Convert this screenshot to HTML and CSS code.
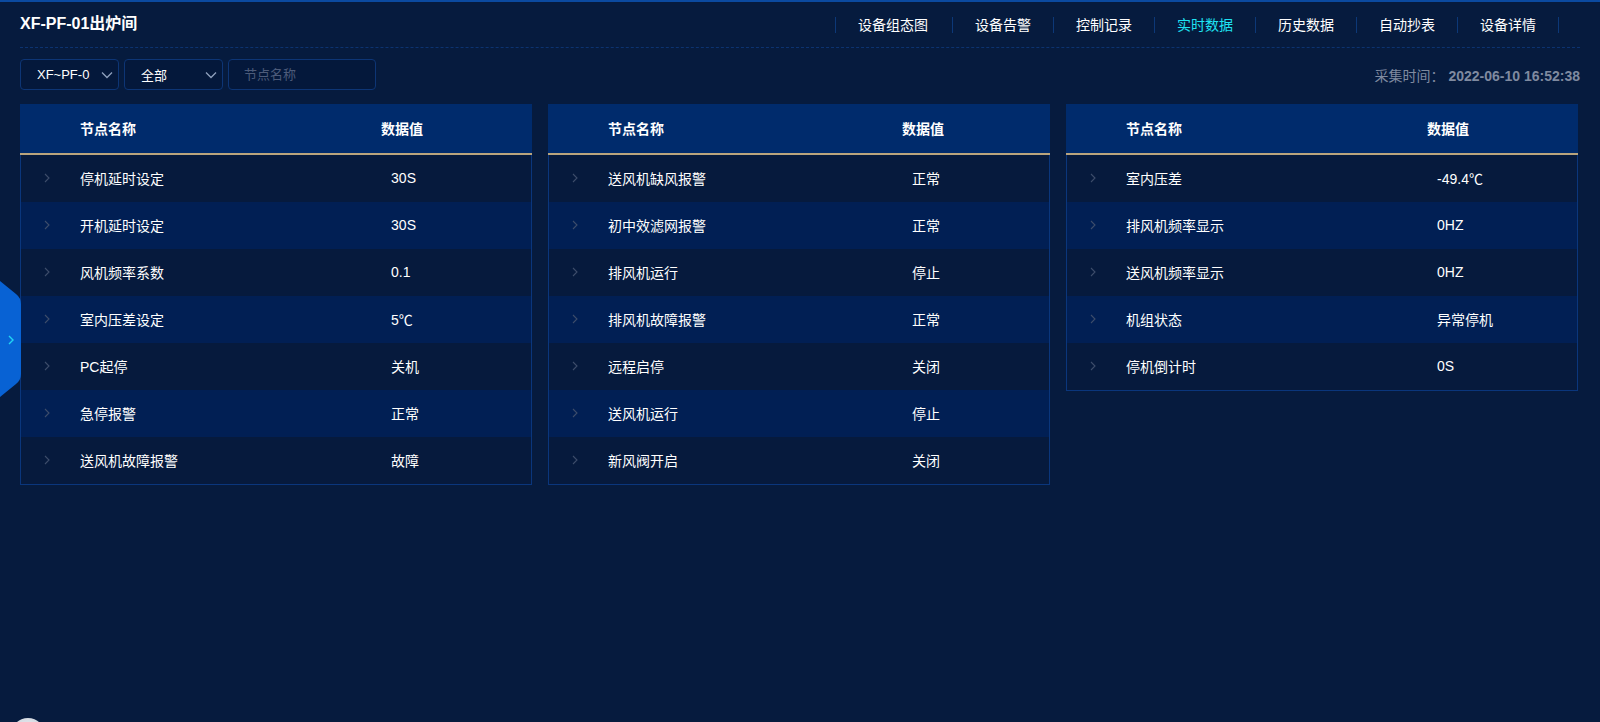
FILE: index.html
```html
<!DOCTYPE html>
<html lang="zh-CN">
<head>
  <meta charset="UTF-8">
  <title>XF-PF-01出炉间 - 实时数据</title>
  <link rel="stylesheet" href="styles.css">
</head>
<body>

  <div class="top-line"></div>

  <header class="head">
    <h1>XF-PF-01出炉间</h1>
    <nav>
      <a>设备组态图</a>
      <a>设备告警</a>
      <a>控制记录</a>
      <a class="active">实时数据</a>
      <a>历史数据</a>
      <a>自动抄表</a>
      <a>设备详情</a>
    </nav>
  </header>

  <div class="toolbar">
    <div class="filters">
      <div class="select select-device">
        <span>XF~PF-01</span>
        <svg width="12" height="8" viewBox="0 0 12 8"><polyline points="1,1.5 6,6.5 11,1.5" fill="none" stroke="#8fa0bd" stroke-width="1.3"/></svg>
      </div>
      <div class="select select-type">
        <span>全部</span>
        <svg width="12" height="8" viewBox="0 0 12 8"><polyline points="1,1.5 6,6.5 11,1.5" fill="none" stroke="#8fa0bd" stroke-width="1.3"/></svg>
      </div>
      <input type="text" class="search" placeholder="节点名称">
    </div>
    <div class="collect-time">采集时间： <b>2022-06-10 16:52:38</b></div>
  </div>

  <div class="panels" id="panels"></div>

  <div class="side-tab">
    <svg width="21" height="117" viewBox="0 0 21 117">
      <path d="M0 0 L16 13 Q21 17 21 23 L21 93 Q21 99 16 103 L0 116 Z" fill="#0862d4"/>
      <polyline points="9,55 13,59 9,63" fill="none" stroke="#21d4f5" stroke-width="1.4"/>
    </svg>
  </div>

  <div class="float-btn"></div>

  <script>
    const groups = [
      [
        ['停机延时设定', '30S'],
        ['开机延时设定', '30S'],
        ['风机频率系数', '0.1'],
        ['室内压差设定', '5℃'],
        ['PC起停', '关机'],
        ['急停报警', '正常'],
        ['送风机故障报警', '故障']
      ],
      [
        ['送风机缺风报警', '正常'],
        ['初中效滤网报警', '正常'],
        ['排风机运行', '停止'],
        ['排风机故障报警', '正常'],
        ['远程启停', '关闭'],
        ['送风机运行', '停止'],
        ['新风阀开启', '关闭']
      ],
      [
        ['室内压差', '-49.4℃'],
        ['排风机频率显示', '0HZ'],
        ['送风机频率显示', '0HZ'],
        ['机组状态', '异常停机'],
        ['停机倒计时', '0S']
      ]
    ];

    const arrow = '<svg width="6" height="10" viewBox="0 0 6 10"><polyline points="1,1 5,5 1,9" fill="none" stroke="#3d4d6b" stroke-width="1.1"/></svg>';

    function renderPanels() {
      const box = document.getElementById('panels');
      box.innerHTML = '';
      groups.forEach(rows => {
        let html = `
          <div class="panel">
            <div class="row row-head">
              <span></span>
              <span>节点名称</span>
              <span>数据值</span>
            </div>`;
        rows.forEach(r => {
          html += `
            <div class="row">
              <span class="expand">${arrow}</span>
              <span>${r[0]}</span>
              <span class="value">${r[1]}</span>
            </div>`;
        });
        html += '</div>';
        box.innerHTML += html;
      });
    }

    renderPanels();
  </script>
</body>
</html>
```

FILE: styles.css
```css
body {
  background-color: #061b3e;
  color: #ffffff;
  font-family: 'Liberation Sans', 'Noto Sans CJK SC', sans-serif;
  margin: 0;
  padding: 0;
  height: 722px;
  overflow: hidden;
  position: relative;
}

.top-line {
  height: 2px;
  background-color: #0b4aa0;
}

.head {
  margin: 0 20px;
  height: 45px;
  border-bottom: 1px dashed #0c3370;
  display: flex;
  align-items: center;
  justify-content: space-between;
}

.head h1 {
  margin: 0;
  font-size: 16px;
  font-weight: bold;
  line-height: 20px;
  padding-bottom: 1px;
}

nav {
  display: flex;
  align-items: center;
  margin-right: 21px;
}

nav a {
  font-size: 14px;
  line-height: 16px;
  padding: 0 22px;
  border-left: 1px solid #0c3878;
  color: #ffffff;
  cursor: pointer;
}

nav a:last-child {
  border-right: 1px solid #0c3878;
}

nav a:first-child {
  padding: 0 24px 0 22px;
}

nav a.active {
  color: #1fe3f2;
}

.toolbar {
  margin: 11px 20px 0;
  height: 31px;
  display: flex;
  align-items: center;
  justify-content: space-between;
}

.filters {
  display: flex;
  gap: 5px;
  height: 31px;
}

.select {
  box-sizing: border-box;
  height: 31px;
  border: 1px solid #0d3575;
  border-radius: 4px;
  background-color: #04183b;
  display: flex;
  align-items: center;
  justify-content: space-between;
  padding: 0 5px 0 16px;
  font-size: 13px;
  cursor: pointer;
}

.select span {
  overflow: hidden;
  white-space: nowrap;
}

.select svg {
  flex-shrink: 0;
  margin-left: 6px;
}

.select-device {
  width: 99px;
}

.select-device span {
  width: 53px;
}

.select-type {
  width: 99px;
}

.search {
  box-sizing: border-box;
  width: 148px;
  height: 31px;
  border: 1px solid #0d3575;
  border-radius: 4px;
  background-color: #04183b;
  color: #ffffff;
  padding: 0 15px;
  font-family: inherit;
  font-size: 13px;
  outline: none;
}

.search::placeholder {
  color: #4c5b7a;
}

.collect-time {
  font-size: 14px;
  color: #7f8aa0;
}

.collect-time b {
  font-weight: bold;
}

.panels {
  margin: 14px 0 0 20px;
  display: grid;
  grid-template-columns: 512px 502px 512px;
  gap: 16px;
  align-items: start;
}

.panel {
  border: 1px solid #0a367c;
  border-top: none;
  background-color: #061a3d;
}

.row {
  box-sizing: border-box;
  display: grid;
  grid-template-columns: 59px 1fr 29.4%;
  align-items: center;
  height: 47px;
  padding-bottom: 2px;
  font-size: 14px;
}

.row:nth-child(odd) {
  background-color: #011f54;
}

.row-head {
  height: 51px;
  padding: 0 1px 2px;
  background-color: #002b6c !important;
  border-bottom: 2px solid #b9a47d;
  font-weight: bold;
  margin: 0 -1px;
}

.expand {
  display: flex;
  padding-left: 23px;
}

.value {
  padding-left: 10px;
}

.side-tab {
  position: absolute;
  left: 0;
  top: 281px;
  width: 21px;
  height: 117px;
}

.side-tab svg {
  display: block;
}

.float-btn {
  position: absolute;
  left: 11px;
  top: 718px;
  width: 34px;
  height: 34px;
  border-radius: 50%;
  background: radial-gradient(circle at 50% 40%, #f2f4f7, #b9c3cf);
}
```
